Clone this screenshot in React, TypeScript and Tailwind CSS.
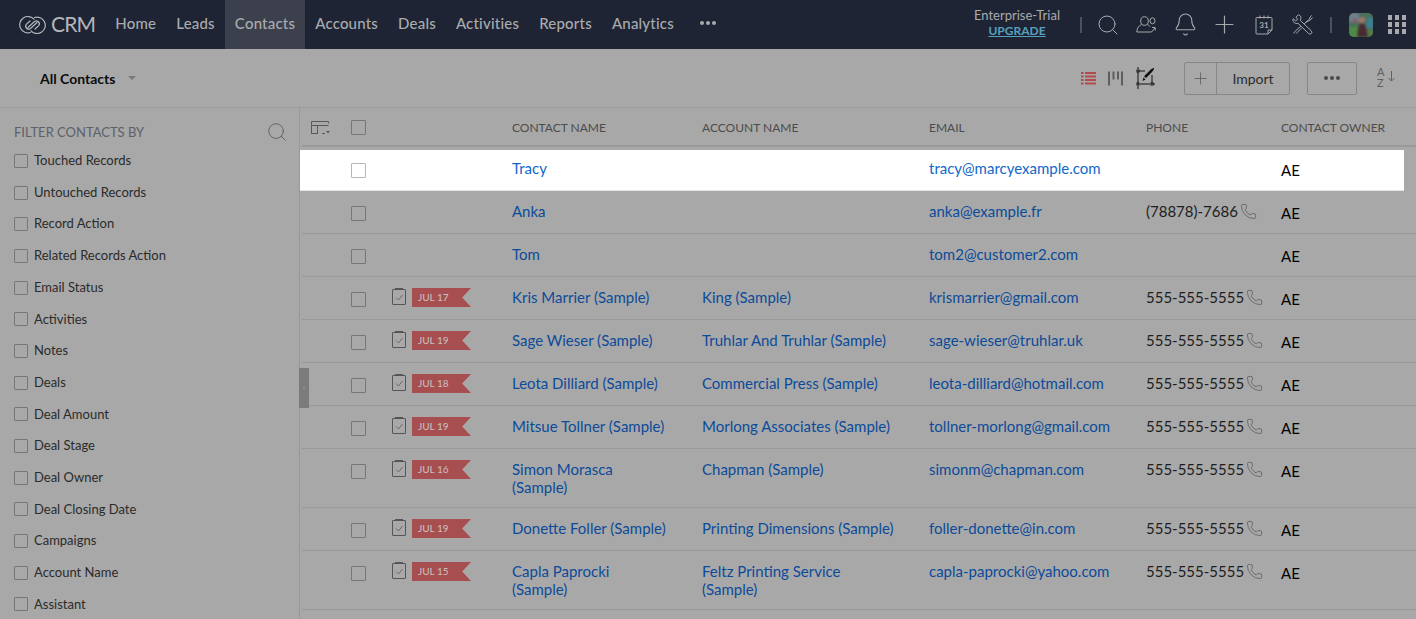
import { Bell, Phone, Plus, Search } from 'lucide-react'

const nav = ['Home', 'Leads', 'Contacts', 'Accounts', 'Deals', 'Activities', 'Reports', 'Analytics']

const filters = [
  'Touched Records', 'Untouched Records', 'Record Action', 'Related Records Action', 'Email Status',
  'Activities', 'Notes', 'Deals', 'Deal Amount', 'Deal Stage', 'Deal Owner', 'Deal Closing Date',
  'Campaigns', 'Account Name', 'Assistant',
]

type Row = { name: string; account?: string; email: string; phone?: string; due?: string; h: string; hl?: boolean }

const rows: Row[] = [
  { name: 'Tracy', email: 'tracy@marcyexample.com', h: 'h-[41px]', hl: true },
  { name: 'Anka', email: 'anka@example.fr', phone: '(78878)-7686', h: 'h-[43px]' },
  { name: 'Tom', email: 'tom2@customer2.com', h: 'h-[43px]' },
  { name: 'Kris Marrier (Sample)', account: 'King (Sample)', email: 'krismarrier@gmail.com', phone: '555-555-5555', due: 'JUL 17', h: 'h-[43px]' },
  { name: 'Sage Wieser (Sample)', account: 'Truhlar And Truhlar (Sample)', email: 'sage-wieser@truhlar.uk', phone: '555-555-5555', due: 'JUL 19', h: 'h-[43px]' },
  { name: 'Leota Dilliard (Sample)', account: 'Commercial Press (Sample)', email: 'leota-dilliard@hotmail.com', phone: '555-555-5555', due: 'JUL 18', h: 'h-[43px]' },
  { name: 'Mitsue Tollner (Sample)', account: 'Morlong Associates (Sample)', email: 'tollner-morlong@gmail.com', phone: '555-555-5555', due: 'JUL 19', h: 'h-[43px]' },
  { name: 'Simon Morasca (Sample)', account: 'Chapman (Sample)', email: 'simonm@chapman.com', phone: '555-555-5555', due: 'JUL 16', h: 'h-[59px]' },
  { name: 'Donette Foller (Sample)', account: 'Printing Dimensions (Sample)', email: 'foller-donette@in.com', phone: '555-555-5555', due: 'JUL 19', h: 'h-[43px]' },
  { name: 'Capla Paprocki (Sample)', account: 'Feltz Printing Service (Sample)', email: 'capla-paprocki@yahoo.com', phone: '555-555-5555', due: 'JUL 15', h: 'h-[59px]' },
]

const cols = 'grid grid-cols-[90px_120px_190px_227px_217px_135px_1fr]'

function Logo() {
  return (
    <svg viewBox="0 0 27 18" className="w-[27px] h-[18px] text-[#b4b6ba]" fill="none" stroke="currentColor" strokeWidth="1.2" strokeLinecap="round">
      <path d="M15 3.200A8.200 8.200 0 1 0 11.500 16.500" />
      <path d="M12 14.800A8.200 8.200 0 1 0 15.500 1.500" />
      <path d="M9 11.500 15.500 5.500a3 3 0 0 1 4.200 4.200L16 13" />
      <path d="M18 6.500 11.500 12.500a3 3 0 0 1-4.200-4.200L11 5" />
    </svg>
  )
}

function Avatar() {
  return (
    <svg viewBox="0 0 24 24" className="w-[24px] h-[24px] ml-[17px] rounded-[5px]">
      <defs>
        <filter id="soft"><feGaussianBlur stdDeviation="1" /></filter>
      </defs>
      <rect width="24" height="24" fill="#49705a" />
      <g filter="url(#soft)">
        <rect x="0" y="0" width="10" height="9" fill="#6d7f8a" />
        <rect x="0" y="14" width="9" height="10" fill="#4f8a45" />
        <rect x="18" y="5" width="6" height="10" fill="#3d7f96" />
        <rect x="16" y="17" width="8" height="7" fill="#587a45" />
        <circle cx="6" cy="8" r="2.500" fill="#8a5a70" />
        <circle cx="13" cy="7" r="3" fill="#a37868" />
        <path d="M8 24c0-9 2-14 5-14s5 5 6 14Z" fill="#4a2a32" />
      </g>
    </svg>
  )
}

function TopIcons() {
  const slot = 'w-[39px] flex items-center justify-center'
  return (
    <div className="flex items-center text-[#a7a9ad]">
      <div className="w-[2px] h-[16px] bg-[#4c515c] ml-[19.500px]" />
      <div className="flex items-center ml-[6.500px]">
        <div className={slot}><Search className="w-[24px] h-[24px]" strokeWidth={1} /></div>
        <div className={slot}>
          <svg viewBox="0 0 21 17" className="w-[21px] h-[17px]" fill="none" stroke="currentColor" strokeWidth="1">
            <ellipse cx="8.500" cy="5" rx="3.800" ry="4.300" />
            <path d="M5.500 8.500C2.500 10 .8 12.500.8 16h10M11.500 8.500c1 .5 2 1.300 2.600 2.200" />
            <ellipse cx="16.500" cy="4.800" rx="2.500" ry="3" />
            <path d="M10.500 16h5l3.500-4M16 11.500h3.200v3" />
          </svg>
        </div>
        <div className={slot}><Bell className="w-[25px] h-[25px]" strokeWidth={1} /></div>
        <div className={slot}><Plus className="w-[29px] h-[29px]" strokeWidth={1} /></div>
        <div className={slot}>
          <svg viewBox="0 0 18 20" className="w-[18px] h-[20px]" fill="none" stroke="currentColor" strokeWidth="1">
            <path d="M2 2.500h14a1 1 0 0 1 1 1V15l-4 4H2a1 1 0 0 1-1-1V3.500a1 1 0 0 1 1-1ZM5 .5v3M9 .5v3M13 .5v3M13 19v-4h4" />
            <text x="9" y="13" fontSize="8" fontWeight="700" textAnchor="middle" fill="currentColor" stroke="none" fontFamily="Lato">31</text>
          </svg>
        </div>
        <div className={slot}>
          <svg viewBox="0 0 20 20" className="w-[21px] h-[21px]" fill="none" stroke="currentColor" strokeWidth=".95">
            <path d="M6 .8 3.800 3 5.500 5.200 3.500 6.500 1 4.500C.3 7.500 3 9.800 5.700 8.800L15.800 18.600a1.700 1.700 0 0 0 2.600-2.500L8 6.200C9 3.500 8.500 1 6 .8Z" />
            <path d="M18.700 1.300 17.200 3 16.700 4.800 11.500 9.500M8.500 11.500 3 16.500 1.500 18.500M3.800 18.800 9 13.500M13 8 17.800 5.500 19.500 3.300" />
          </svg>
        </div>
      </div>
      <div className="w-[2px] h-[16px] bg-[#4c515c] ml-[7.500px]" />
      <Avatar />
      <div className="grid grid-cols-3 gap-[2.500px] ml-[15px]">
        {Array.from({ length: 9 }).map((_, i) => (
          <span key={i} className="w-[4.500px] h-[4.500px] bg-[#a7a9ad]" />
        ))}
      </div>
    </div>
  )
}

function Box({ white, small }: { white?: boolean; small?: boolean }) {
  return (
    <span className={`block border rounded-[1px] ${small ? 'w-[14px] h-[14px]' : 'w-[15px] h-[15px]'} ${white ? 'border-[#b5b5b5] bg-white' : 'border-[#777777]'}`} />
  )
}

function TaskFlag({ due }: { due: string }) {
  return (
    <div className="flex items-start">
      <svg viewBox="0 0 14 17" className="w-[14px] h-[17px]" fill="none" stroke="#555555" strokeWidth="1">
        <rect x=".5" y="1.500" width="13" height="15" rx=".5" />
        <rect x="3" y="0" width="8" height="2" fill="#555555" stroke="none" />
        <path d="m4 9.500 2.500 2.500 4-5" stroke="#6a6a6a" />
      </svg>
      <div className="ml-[6px] w-[59px] h-[19px] bg-[#a74e50] text-[#c9bcbc] text-[10px] font-medium leading-[19px] pl-[6px] [clip-path:polygon(0_0,100%_0,85%_50%,100%_100%,0_100%)]">
        {due}
      </div>
    </div>
  )
}

function TableRow({ row }: { row: Row }) {
  const link = row.hl ? 'text-[#1267c9]' : 'text-[#0c4b9a]'
  const text = row.hl ? 'pt-[9px]' : 'pt-[11px]'
  return (
    <div className={`${cols} ${row.h} text-[15px] leading-[18px] ${row.hl ? 'bg-white -ml-[2px] pl-[2px] mr-[12px] border-b border-[#e6e6e6]' : 'border-b border-[#999999]'}`}>
      <div className={`pl-[49px] ${row.hl ? 'pt-[13px]' : 'pt-[15px]'}`}><Box white={row.hl} /></div>
      <div className="pt-[11px]">{row.due && <TaskFlag due={row.due} />}</div>
      <div className={`${text} ${link} max-w-[155px]`}>{row.name}</div>
      <div className={`${text} ${link} max-w-[195px]`}>{row.account}</div>
      <div className={`${text} ${link}`}>{row.email}</div>
      <div className={`${text} flex items-start text-[#1d1d1d]`}>
        {row.phone}
        {row.phone && <Phone className="w-[17px] h-[17px] ml-[2px] mt-[1px] text-[#555555]" strokeWidth={1} />}
      </div>
      <div className={`text-black ${row.hl ? 'pt-[11px]' : 'pt-[13px]'}`}>AE</div>
    </div>
  )
}

export default function App() {
  return (
    <div className="w-[1416px] h-[619px] overflow-hidden bg-[#a8a8a8] font-['Lato','Noto_Sans',sans-serif]">
      <header className="h-[49px] bg-[#1e2433] flex items-center pl-[19px] pr-[10px]">
        <Logo />
        <span className="ml-[5px] text-[21px] text-[#b4b6ba] tracking-[-0.8px] pb-[1px]">CRM</span>
        <nav className="flex items-center h-full ml-[10px]">
          {nav.map(n => (
            <span key={n} className={`h-full flex items-center px-[10px] pb-[2px] text-[15px] font-medium tracking-[0.2px] text-[#a9abaf] ${n === 'Contacts' ? 'bg-[#3c404c]' : ''}`}>{n}</span>
          ))}
          <span className="ml-[16px] flex gap-[2px] pb-[4px]">
            <i className="block w-[4px] h-[4px] rounded-full bg-[#a9abaf]" />
            <i className="block w-[4px] h-[4px] rounded-full bg-[#a9abaf]" />
            <i className="block w-[4px] h-[4px] rounded-full bg-[#a9abaf]" />
          </span>
        </nav>
        <div className="ml-auto flex items-center">
          <div className="flex flex-col items-center leading-[15px] pb-[4px]">
            <span className="text-[13px] text-[#a9abaf]">Enterprise-Trial</span>
            <span className="text-[12px] text-[#57a0bd] font-bold underline">UPGRADE</span>
          </div>
          <TopIcons />
        </div>
      </header>

      <div className="h-[59px] border-b border-[#9c9c9c] flex items-center pl-[40px] pr-[21px]">
        <span className="text-[14px] font-bold text-[#0d0d0d]">All Contacts</span>
        <span className="ml-[13px] w-0 h-0 border-x-[4px] border-x-transparent border-t-[4px] border-t-[#7a7a7a]" />
        <div className="ml-auto flex items-center">
          <svg viewBox="0 0 15 14" className="w-[15px] h-[14px]" fill="none" stroke="#b24c4c" strokeWidth="2">
            <path d="M0 2h2.500M4 2h11M0 5.500h2.500M4 5.500h11M0 9h2.500M4 9h11M0 12.500h2.500M4 12.500h11" />
          </svg>
          <svg viewBox="0 0 15 14" className="w-[15px] h-[15px] ml-[12px]" fill="none" stroke="#5f5f5f" strokeWidth="2">
            <path d="M1 0v14M5.500 0v8M10 0v8M14 0v14" />
          </svg>
          <svg viewBox="0 0 20 22" className="w-[20px] h-[22px] ml-[12px]" fill="none" stroke="#111111" strokeWidth="1">
            <path d="M3 0v2M3 5v11M3 19v3M5 17h10M18 17h2M4 4h6M17 8v8" />
            <rect x="2" y="3" width="2" height="2" />
            <rect x="2" y="16" width="2" height="2" />
            <rect x="16" y="16" width="2" height="2" />
            <path d="M19 1c.3.8-.5 2.500-2 4l-6 6-2-1.800 6-6C16.500 1.800 18 .8 19 1ZM8.500 10.500l2 2-3 1.500Z" fill="#111111" stroke="none" />
          </svg>
          <div className="ml-[29px] flex h-[33px] w-[106px] border border-[#868686] rounded-[2px] text-[#2c2c2c]">
            <div className="w-[32px] flex items-center justify-center border-r border-[#868686]">
              <Plus className="w-[19px] h-[19px] text-[#5a5a5a]" strokeWidth={1} />
            </div>
            <div className="flex-1 flex items-center justify-center text-[14px]">Import</div>
          </div>
          <div className="ml-[17px] w-[50px] h-[33px] border border-[#868686] rounded-[2px] flex items-center justify-center gap-[2px]">
            <i className="block w-[4px] h-[4px] rounded-full bg-[#4a4a4a]" />
            <i className="block w-[4px] h-[4px] rounded-full bg-[#4a4a4a]" />
            <i className="block w-[4px] h-[4px] rounded-full bg-[#4a4a4a]" />
          </div>
          <div className="ml-[20px] relative w-[18px] h-[24px] text-[#5f5f5f] text-[11px] leading-[11px]">
            <span className="block">A</span>
            <span className="block">Z</span>
            <svg viewBox="0 0 7 11" className="absolute right-0 top-[5px] w-[7px] h-[11px]" fill="none" stroke="currentColor">
              <path d="M3.500 0v10M.5 7l3 3 3-3" />
            </svg>
          </div>
        </div>
      </div>

      <div className="flex h-[511px]">
        <aside className="relative w-[300px] shrink-0 border-r border-[#999999]">
          <div className="flex items-center justify-between pl-[14px] pr-[11px] pt-[13px]">
            <span className="text-[13px] text-[#5d6068] leading-[20px]">FILTER CONTACTS BY</span>
            <Search className="w-[22px] h-[22px] text-[#5f5f5f]" strokeWidth={1} />
          </div>
          <ul className="mt-[2px]">
            {filters.map(f => (
              <li key={f} className="flex items-center h-[31.700px] pl-[14px] text-[13px] text-[#2b2b2b]">
                <Box small />
                <span className="ml-[6px]">{f}</span>
              </li>
            ))}
          </ul>
          <div className="absolute -right-[10px] top-[260px] w-[10px] h-[40px] bg-[#7b7b7b] flex items-center justify-center text-[#a8a8a8] text-[9px]">‹</div>
        </aside>

        <main className="flex-1 min-w-0 pl-[2px]">
          <div className={`${cols} h-[39px] pt-[3px] mb-[3px] text-[12px] text-[#4c4c4c] items-center border-b-2 border-[#9a9a9a]`}>
            <div className="flex items-center pl-[9px]">
              <svg viewBox="0 0 19 14" className="w-[19px] h-[14px] -mt-[1px]" fill="none" stroke="#5a5a5a">
                <path d="M.5 13V.5h17v2M.5 4.500h17M6.500 4.500V13M.5 12.500h6M11 12.500h3" />
                <path d="M15 10h4l-2 2.500Z" fill="#5a5a5a" stroke="none" />
              </svg>
              <span className="ml-[21px] -mt-[1px]"><Box /></span>
            </div>
            <div />
            <div>CONTACT NAME</div>
            <div>ACCOUNT NAME</div>
            <div>EMAIL</div>
            <div>PHONE</div>
            <div>CONTACT OWNER</div>
          </div>
          {rows.map(r => <TableRow key={r.name} row={r} />)}
        </main>
      </div>
    </div>
  )
}
